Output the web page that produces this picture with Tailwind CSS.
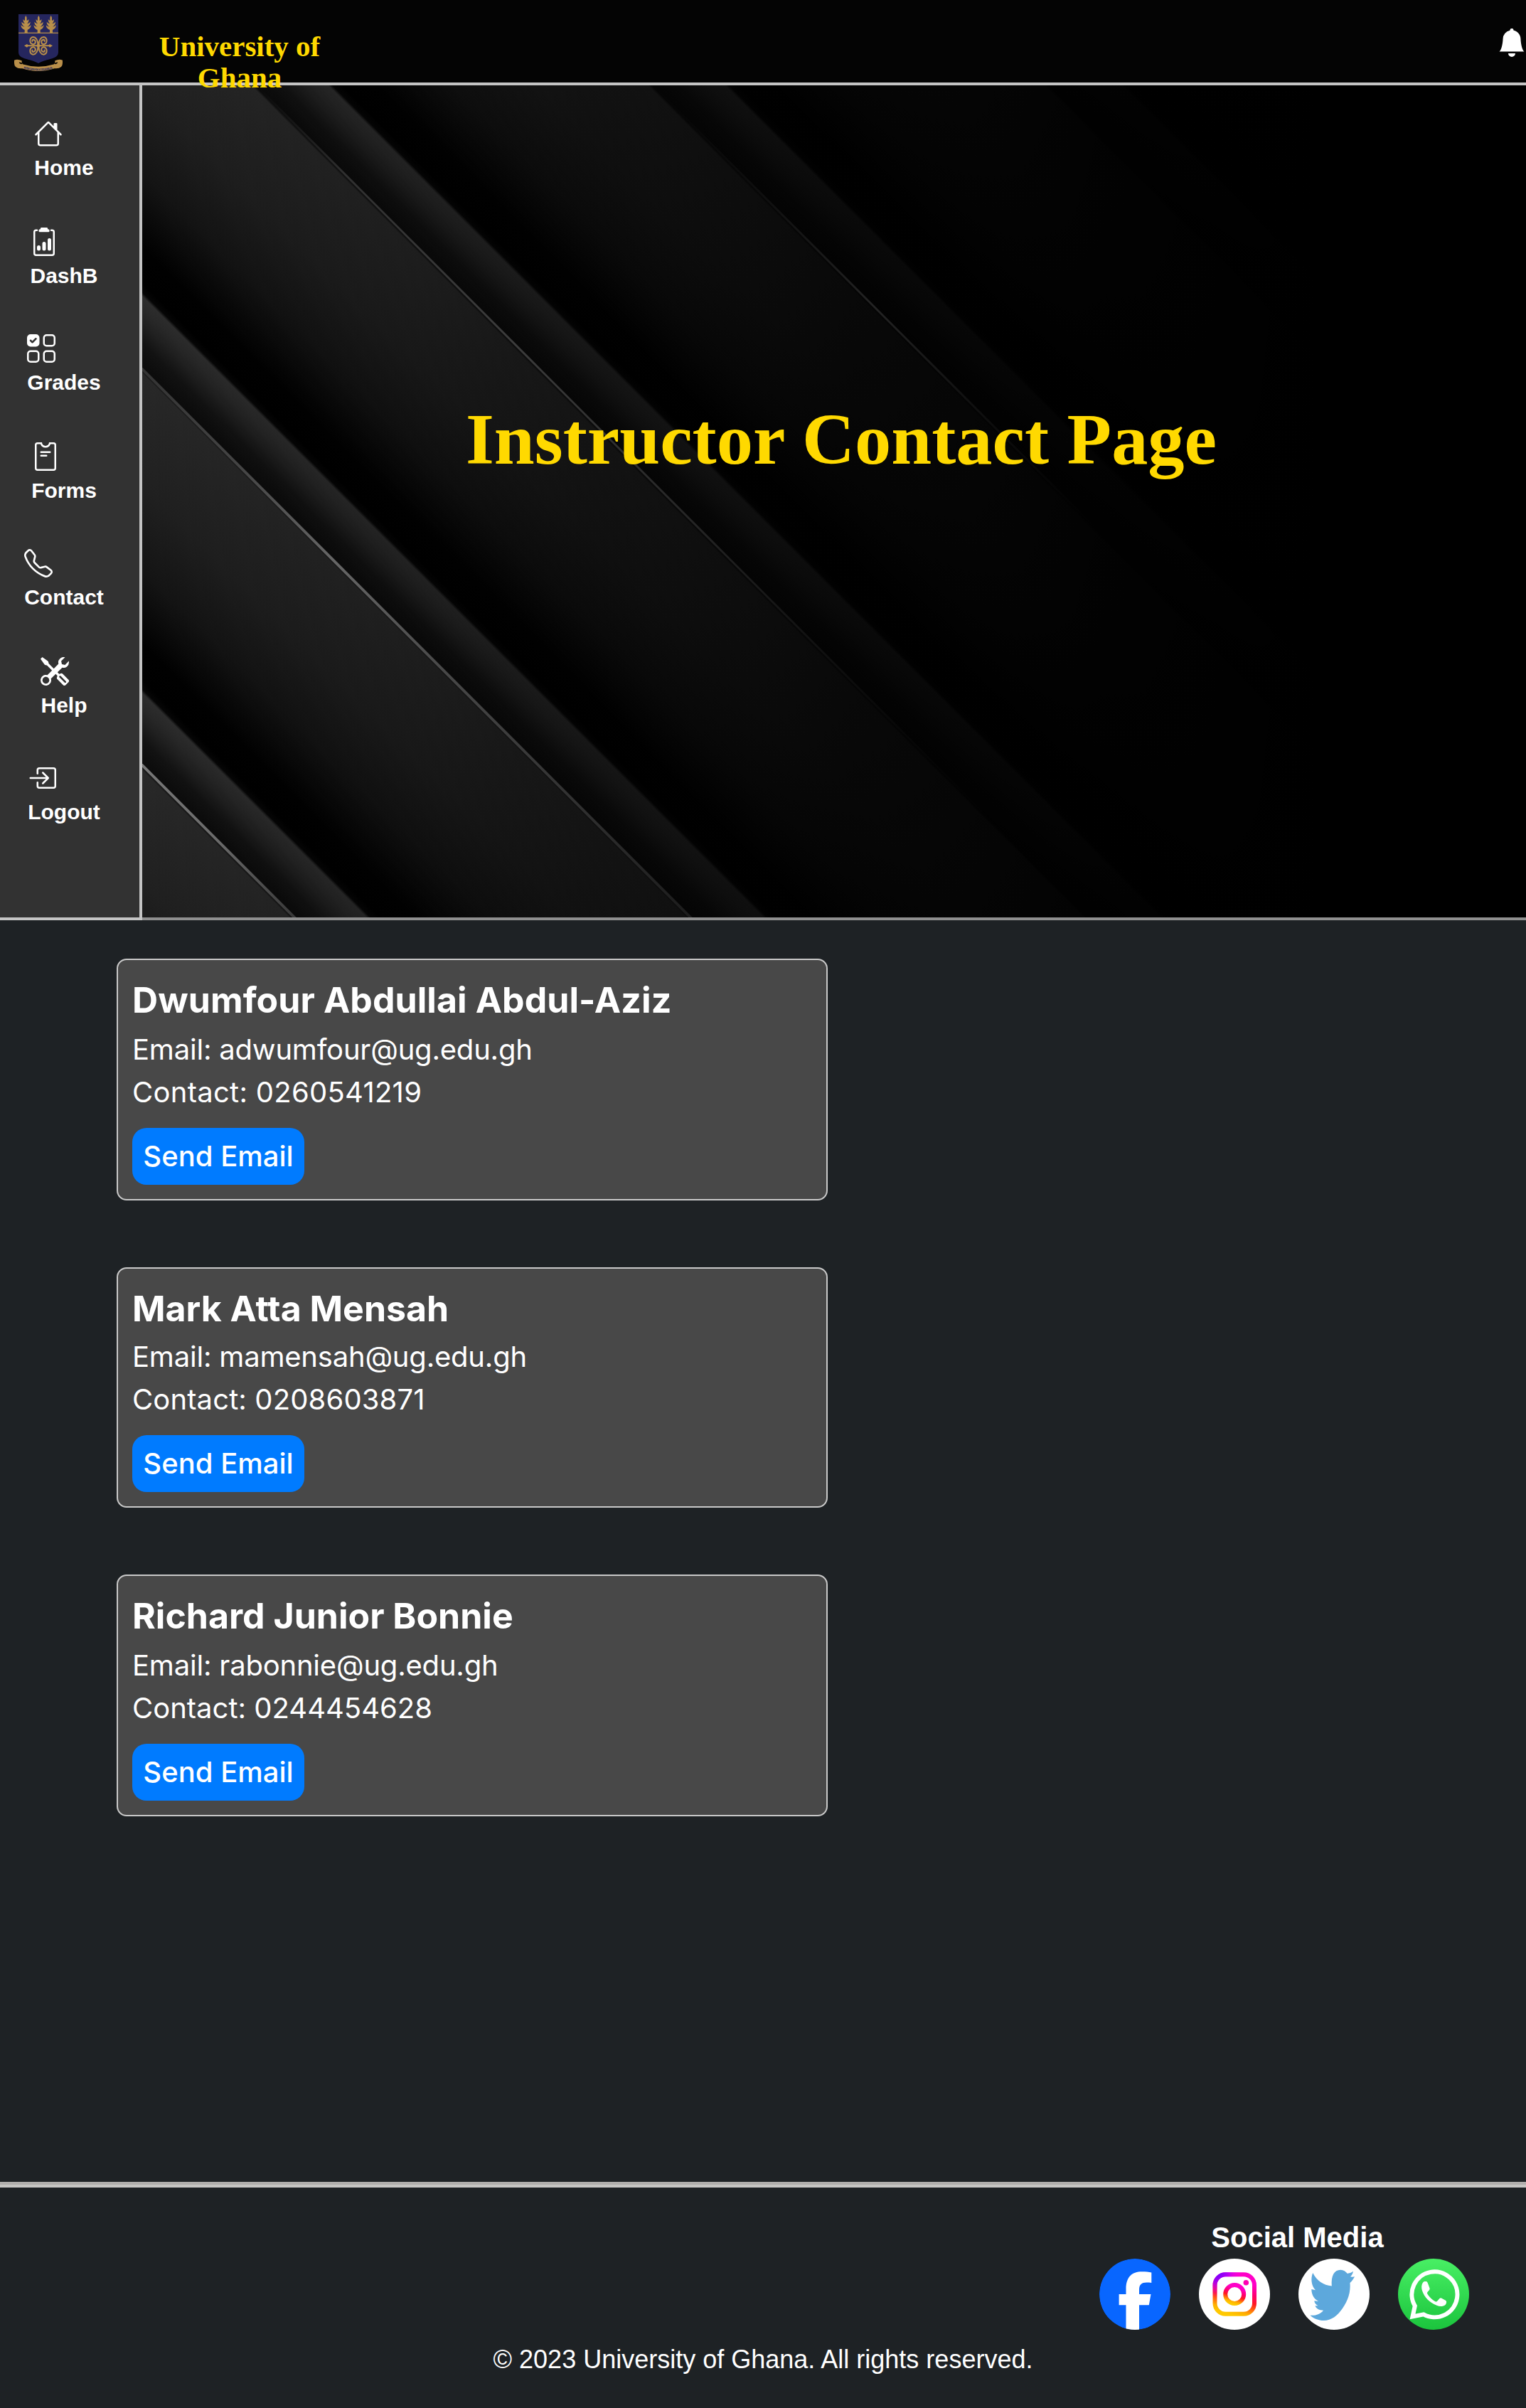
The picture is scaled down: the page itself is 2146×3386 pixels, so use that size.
<!DOCTYPE html>
<html lang="en">
<head>
<meta charset="utf-8">
<title>Instructor Contact Page</title>
<script src="https://cdn.jsdelivr.net/npm/@tailwindcss/browser@4"></script>
</head>
<body class="bg-[#1e2225] text-white font-['Liberation_Sans',sans-serif] w-[2146px] h-[3386px] overflow-hidden flex flex-col">
<header class="relative z-10 h-[120px] shrink-0 bg-[#040404] border-b-4 border-[#c4c4c4] flex justify-between">
  <div class="flex">
    <svg class="ml-5 mt-5 w-[68px] h-[80px]" viewBox="0 0 204 240">
      <path d="M18 0H186V160C186 192 140 186 102 207C64 186 18 192 18 160Z" fill="#25265e"/>
      <g fill="#b98f4a">
        <g id="tree"><path d="M49 5L53 14V27Q59 25 62 21Q62 33 54 40Q63 39 68 32Q68 45 56 53Q65 53 71 46Q70 60 56 66V78H44V66Q30 62 28 46Q34 53 44 53Q31 46 31 32Q36 39 45 40Q37 33 37 21Q40 25 45 27V14Z"/></g>
        <use href="#tree" x="54"/><use href="#tree" x="106"/>
        <path d="M18 77H186V81H18Z"/>
        <path d="M42 133L54 126L58 130H95L102 122L109 130H146L150 126L162 133L150 140L146 136H109L102 144L95 136H58L54 140Z"/>
        <path d="M0 194Q14 188 32 196V206Q22 200 20 204Q24 212 34 210L36 206V228Q0 232 0 206ZM204 194Q190 188 172 196V206Q182 200 184 204Q180 212 170 210L168 206V228Q204 232 204 206Z"/>
        <path d="M32 210Q102 232 172 210V228Q102 252 32 228Z"/>
      </g>
      <g fill="none" stroke="#b98f4a" stroke-width="6">
        <path id="curl" d="M101 131Q98 96 79 96A16 16 0 0 0 79 127A10 10 0 0 0 80 107A5 5 0 0 0 78 116"/>
        <use href="#curl" transform="translate(204 0) scale(-1 1)"/>
        <use href="#curl" transform="translate(0 266) scale(1 -1)"/>
        <use href="#curl" transform="translate(204 266) scale(-1 -1)"/>
      </g>
      <path id="motto" d="M40 229Q102 248 166 229" fill="none"/>
      <text font-size="13" font-weight="700" fill="#25265e" font-family="Liberation Sans"><textPath href="#motto" textLength="124">INTEGRI PROCEDAMUS</textPath></text>
    </svg>
    <h2 class="ml-[119px] mt-[43px] w-[260px] text-center text-[40.96px] leading-[44px] font-bold text-[#ffd900] font-['Liberation_Serif',serif]">University of Ghana</h2>
  </div>
  <svg class="mt-10 size-10" viewBox="0 0 16 16" fill="#fff"><path d="M8 16a2 2 0 0 0 2-2H6a2 2 0 0 0 2 2zm.995-14.901a1 1 0 1 0-1.99 0A5.002 5.002 0 0 0 3 6c0 1.098-.5 6-2 7h14c-1.5-1-2-5.902-2-7 0-2.42-1.72-4.44-4.005-4.901z"/></svg>
</header>

<div class="flex h-[1174px] shrink-0">
  <nav class="w-[200px] shrink-0 bg-[#323232] border-r-4 border-b-4 border-[#c4c4c4] pt-12 pr-4 flex flex-col items-center text-[30px] leading-[34px] font-bold">
    <a class="h-[152px] shrink-0"><svg class="size-10 mb-[11px]" viewBox="0 0 16 16" fill="#fff"><path d="M8.707 1.5a1 1 0 0 0-1.414 0L.646 8.146a.5.5 0 0 0 .708.708L2 8.207V13.5A1.5 1.5 0 0 0 3.5 15h9a1.5 1.5 0 0 0 1.5-1.5V8.207l.646.647a.5.5 0 0 0 .708-.708L13 5.793V2.5a.5.5 0 0 0-.5-.5h-1a.5.5 0 0 0-.5.5v1.293L8.707 1.5ZM13 7.207V13.5a.5.5 0 0 1-.5.5h-9a.5.5 0 0 1-.5-.5V7.207l5-5 5 5Z"/></svg><span class="block">Home</span></a>
    <a class="h-[150px] shrink-0"><svg class="size-10 mb-[11px]" viewBox="0 0 16 16" fill="#fff"><path d="M9.5 0a.5.5 0 0 1 .5.5.5.5 0 0 0 .5.5.5.5 0 0 1 .5.5V2a.5.5 0 0 1-.5.5h-5A.5.5 0 0 1 5 2v-.5a.5.5 0 0 1 .5-.5.5.5 0 0 0 .5-.5.5.5 0 0 1 .5-.5h3Z"/><path d="M3 2.5a.5.5 0 0 1 .5-.5H4a.5.5 0 0 0 0-1h-.5A1.5 1.5 0 0 0 2 2.5v12A1.5 1.5 0 0 0 3.5 16h9a1.5 1.5 0 0 0 1.5-1.5v-12A1.5 1.5 0 0 0 12.5 1H12a.5.5 0 0 0 0 1h.5a.5.5 0 0 1 .5.5v12a.5.5 0 0 1-.5.5h-9a.5.5 0 0 1-.5-.5v-12Z"/><path d="M10 7a1 1 0 1 1 2 0v5a1 1 0 1 1-2 0V7Zm-6 4a1 1 0 1 1 2 0v1a1 1 0 1 1-2 0v-1Zm4-3a1 1 0 0 0-1 1v3a1 1 0 1 0 2 0V9a1 1 0 0 0-1-1Z"/></svg><span class="block">DashB</span></a>
    <a class="h-[152px] shrink-0"><svg class="size-10 mb-[11px]" viewBox="0 0 16 16" fill="#fff"><path d="M2 10h3a1 1 0 0 1 1 1v3a1 1 0 0 1-1 1H2a1 1 0 0 1-1-1v-3a1 1 0 0 1 1-1zm9-9h3a1 1 0 0 1 1 1v3a1 1 0 0 1-1 1h-3a1 1 0 0 1-1-1V2a1 1 0 0 1 1-1zm0 9a1 1 0 0 0-1 1v3a1 1 0 0 0 1 1h3a1 1 0 0 0 1-1v-3a1 1 0 0 0-1-1h-3zm0-10a2 2 0 0 0-2 2v3a2 2 0 0 0 2 2h3a2 2 0 0 0 2-2V2a2 2 0 0 0-2-2h-3zM2 9a2 2 0 0 0-2 2v3a2 2 0 0 0 2 2h3a2 2 0 0 0 2-2v-3a2 2 0 0 0-2-2H2zm7 2a2 2 0 0 1 2-2h3a2 2 0 0 1 2 2v3a2 2 0 0 1-2 2h-3a2 2 0 0 1-2-2v-3zM0 2a2 2 0 0 1 2-2h3a2 2 0 0 1 2 2v3a2 2 0 0 1-2 2H2a2 2 0 0 1-2-2V2zm5.354.854a.5.5 0 1 0-.708-.708L3 3.793l-.646-.647a.5.5 0 1 0-.708.708l1 1a.5.5 0 0 0 .708 0l2-2z" fill-rule="evenodd"/></svg><span class="block">Grades</span></a>
    <a class="h-[150px] shrink-0"><svg class="size-10 mb-[11px]" viewBox="0 0 16 16" fill="#fff"><path d="M5.5 5a.5.5 0 0 0 0 1h5a.5.5 0 0 0 0-1h-5Zm0 2a.5.5 0 0 0 0 1h3a.5.5 0 0 0 0-1h-3Z"/><path d="M8 2a2 2 0 0 0 2-2h2.5A1.5 1.5 0 0 1 14 1.5v13a1.5 1.5 0 0 1-1.5 1.5h-9A1.5 1.5 0 0 1 2 14.5v-13A1.5 1.5 0 0 1 3.5 0H6a2 2 0 0 0 2 2Zm0 1a3.001 3.001 0 0 1-2.83-2H3.5a.5.5 0 0 0-.5.5v13a.5.5 0 0 0 .5.5h9a.5.5 0 0 0 .5-.5v-13a.5.5 0 0 0-.5-.5h-1.67A3.001 3.001 0 0 1 8 3Z"/></svg><span class="block">Forms</span></a>
    <a class="h-[152px] shrink-0"><svg class="size-10 mb-[11px]" viewBox="0 0 16 16" fill="#fff"><path d="M3.654 1.328a.678.678 0 0 0-1.015-.063L1.605 2.3c-.483.484-.661 1.169-.45 1.77a17.568 17.568 0 0 0 4.168 6.608 17.569 17.569 0 0 0 6.608 4.168c.601.211 1.286.033 1.77-.45l1.034-1.034a.678.678 0 0 0-.063-1.015l-2.307-1.794a.678.678 0 0 0-.58-.122l-2.19.547a1.745 1.745 0 0 1-1.657-.459L5.482 8.062a1.745 1.745 0 0 1-.46-1.657l.548-2.19a.678.678 0 0 0-.122-.58L3.654 1.328zM1.884.511a1.745 1.745 0 0 1 2.612.163L6.29 2.98c.329.423.445.974.315 1.494l-.547 2.19a.678.678 0 0 0 .178.643l2.457 2.457a.678.678 0 0 0 .644.178l2.189-.547a1.745 1.745 0 0 1 1.494.315l2.306 1.794c.829.645.905 1.87.163 2.611l-1.034 1.034c-.74.74-1.846 1.065-2.877.702a18.634 18.634 0 0 1-7.01-4.42 18.634 18.634 0 0 1-4.42-7.009c-.362-1.03-.037-2.137.703-2.877L1.885.511z"/></svg><span class="block">Contact</span></a>
    <a class="h-[150px] shrink-0"><svg class="size-10 mb-[11px]" viewBox="0 0 16 16" fill="#fff"><path d="M1 0 0 1l2.2 3.081a1 1 0 0 0 .815.419h.07a1 1 0 0 1 .708.293l2.675 2.675-2.617 2.654A3.003 3.003 0 0 0 0 13a3 3 0 1 0 5.878-.851l2.654-2.617.968.968-.305.914a1 1 0 0 0 .242 1.023l3.27 3.27a.997.997 0 0 0 1.414 0l1.586-1.586a.997.997 0 0 0 0-1.414l-3.27-3.27a1 1 0 0 0-1.023-.242L10.5 9.5l-.96-.96 2.68-2.643A3.005 3.005 0 0 0 16 3c0-.269-.035-.53-.102-.777l-2.14 2.141L12 4l-.364-1.757L13.777.102a3 3 0 0 0-3.675 3.68L7.462 6.46 4.793 3.793a1 1 0 0 1-.293-.707v-.071a1 1 0 0 0-.419-.814L1 0Zm9.646 10.646a.5.5 0 0 1 .708 0l2.914 2.915a.5.5 0 0 1-.707.707l-2.915-2.914a.5.5 0 0 1 0-.708ZM3 11l.471.242.529.026.287.445.445.287.026.529L5 13l-.242.471-.026.529-.445.287-.287.445-.529.026L3 15l-.471-.242L2 14.732l-.287-.445L1.268 14l-.026-.529L1 13l.242-.471.026-.529.445-.287.287-.445.529-.026L3 11Z"/></svg><span class="block">Help</span></a>
    <a class="h-[150px] shrink-0"><svg class="size-10 mb-[11px]" viewBox="0 0 16 16" fill="#fff"><path d="M6 3.5a.5.5 0 0 1 .5-.5h8a.5.5 0 0 1 .5.5v9a.5.5 0 0 1-.5.5h-8a.5.5 0 0 1-.5-.5v-2a.5.5 0 0 0-1 0v2A1.5 1.5 0 0 0 6.5 14h8a1.5 1.5 0 0 0 1.5-1.5v-9A1.5 1.5 0 0 0 14.5 2h-8A1.5 1.5 0 0 0 5 3.5v2a.5.5 0 0 0 1 0v-2z"/><path d="M11.854 8.354a.5.5 0 0 0 0-.708l-3-3a.5.5 0 1 0-.708.708L10.293 7.5H1.5a.5.5 0 0 0 0 1h8.793l-2.147 2.146a.5.5 0 0 0 .708.708l3-3z"/></svg><span class="block">Logout</span></a>
  </nav>
  <section class="relative grow border-b-4 border-[#8f8f8f] bg-[linear-gradient(90deg,transparent_0px,rgb(0_0_0/.25)_370px,rgb(0_0_0/.52)_650px,rgb(0_0_0/.78)_1000px,rgb(0_0_0/.94)_1350px,#000_1650px),repeating-linear-gradient(45deg,#0b0b0b_150px,#0d0d0d_160px,#121212_176px,#212121_198px,#282828_210px,#2d2d2d_223px,#060606_227px,#000_236px,#010101_272px,#141414_345px,#202020_430px,#282828_541px,#0b0b0b_544.6px)] flex justify-center pl-5">
    <svg class="absolute inset-0 w-[1946px] h-[1170px]" viewBox="0 0 1946 1170" fill="none" stroke-width="4">
      <defs>
        <linearGradient id="edgeA" gradientUnits="userSpaceOnUse" x1="0" y1="0" x2="214" y2="0"><stop stop-color="#777"/><stop offset=".5" stop-color="#6a6a6a"/><stop offset="1" stop-color="#383838"/></linearGradient>
        <linearGradient id="edgeB" gradientUnits="userSpaceOnUse" x1="0" y1="0" x2="770" y2="0"><stop stop-color="#333"/><stop offset=".18" stop-color="#444"/><stop offset=".35" stop-color="#666"/><stop offset=".55" stop-color="#484848"/><stop offset="1" stop-color="#1c1c1c"/></linearGradient>
        <linearGradient id="edgeC" gradientUnits="userSpaceOnUse" x1="160" y1="0" x2="1200" y2="0"><stop stop-color="#222" stop-opacity="0"/><stop offset=".12" stop-color="#303030"/><stop offset=".35" stop-color="#3c3c3c"/><stop offset=".6" stop-color="#242424"/><stop offset="1" stop-color="#0a0a0a" stop-opacity="0"/></linearGradient>
        <linearGradient id="edgeD" gradientUnits="userSpaceOnUse" x1="718" y1="0" x2="1340" y2="0"><stop stop-color="#111" stop-opacity="0"/><stop offset=".5" stop-color="#242424"/><stop offset="1" stop-color="#111" stop-opacity="0"/></linearGradient>
      </defs>
      <path d="M-5 951L216 1172" stroke="url(#edgeA)"/>
      <path d="M-5 394L773 1172" stroke="url(#edgeB)"/>
      <path d="M156 -4L1332 1172" stroke="url(#edgeC)" stroke-width="3"/>
      <path d="M714 -4L1890 1172" stroke="url(#edgeD)" stroke-width="3"/>
    </svg>
    <h1 class="relative mt-[438px] text-[102.4px] leading-[120px] font-bold text-[#ffd900] font-['Liberation_Serif',serif]">Instructor Contact Page</h1>
  </section>
</div>

<main class="h-[1774px] shrink-0 pt-[54px] pl-[164px] flex flex-col gap-[94px] font-['Inter',sans-serif] text-[40px] leading-[60px]">
  <article class="w-[1000px] h-[340px] border-2 border-[#c9c9c9] rounded-[14px] bg-[#484848] p-5">
    <h5 class="mb-1 text-[50px] leading-[72px] font-bold tracking-[0.08px]">Dwumfour Abdullai Abdul-Aziz</h5>
    <p class="tracking-[-0.2px]">Email: adwumfour@ug.edu.gh</p>
    <p class="tracking-[0.27px]">Contact: 0260541219</p>
    <button class="mt-5 w-[242px] h-20 rounded-[20px] bg-[#007bff] font-medium">Send Email</button>
  </article>
  <article class="w-[1000px] h-[338px] border-2 border-[#c9c9c9] rounded-[14px] bg-[#484848] p-5">
    <h5 class="mb-0.5 text-[50px] leading-[72px] font-bold">Mark Atta Mensah</h5>
    <p class="tracking-[-0.2px]">Email: mamensah@ug.edu.gh</p>
    <p class="tracking-[0.12px]">Contact: 0208603871</p>
    <button class="mt-5 w-[242px] h-20 rounded-[20px] bg-[#007bff] font-medium">Send Email</button>
  </article>
  <article class="w-[1000px] h-[340px] border-2 border-[#c9c9c9] rounded-[14px] bg-[#484848] p-5">
    <h5 class="mb-1 text-[50px] leading-[72px] font-bold">Richard Junior Bonnie</h5>
    <p class="tracking-[-0.2px]">Email: rabonnie@ug.edu.gh</p>
    <p>Contact: 0244454628</p>
    <button class="mt-5 w-[242px] h-20 rounded-[20px] bg-[#007bff] font-medium">Send Email</button>
  </article>
</main>
<div class="h-1 shrink-0 bg-[#b0aeac]"></div>
<footer class="grow border-t-4 border-[#c6c5c3] flex flex-col">
  <div class="self-end mr-20 w-[520px] mt-[47px]">
    <h4 class="ml-[37px] text-center text-[40px] leading-[46px] font-bold">Social Media</h4>
    <div class="flex gap-10 mt-[7px]">
      <svg class="size-[100px]" viewBox="0 0 100 100"><defs><clipPath id="disc"><circle cx="50" cy="50" r="50"/></clipPath></defs><g clip-path="url(#disc)"><circle cx="50" cy="50" r="50" fill="#0866ff"/><path d="M37.5 100V65.3H27.6V50H37.5V43C37.5 26 45.500 18.300 60 18.300C65 18.300 70 18.800 73.300 19.600V34C71 33.700 69 33.600 66.500 33.600C59.500 33.600 56 36.500 56 44V50H72.500L69.800 65.300H56V100Z" fill="#fff"/></g></svg>
      <svg class="size-[100px]" viewBox="0 0 100 100"><defs><linearGradient id="ig" x1=".35" y1="1" x2=".65" y2="0"><stop offset="0" stop-color="#ffc800"/><stop offset=".12" stop-color="#ffb000"/><stop offset=".4" stop-color="#ff1a20"/><stop offset=".6" stop-color="#ff0070"/><stop offset=".85" stop-color="#ff00c8"/></linearGradient><radialGradient id="ig2" gradientUnits="userSpaceOnUse" cx="26" cy="20" r="34"><stop offset="0" stop-color="#6a00ff"/><stop offset=".4" stop-color="#9a00ff" stop-opacity=".8"/><stop offset="1" stop-color="#f0f" stop-opacity="0"/></radialGradient></defs><circle cx="50" cy="50" r="50" fill="#fff"/><g fill="none" stroke-width="6"><rect x="22.500" y="22.200" width="55.500" height="55.500" rx="15" stroke="url(#ig)"/><rect x="22.500" y="22.200" width="55.500" height="55.500" rx="15" stroke="url(#ig2)"/><circle cx="50.200" cy="50" r="13" stroke="url(#ig)"/></g><circle cx="66.300" cy="33.700" r="3.800" fill="#ff00b4"/></svg>
      <svg class="size-[100px]" viewBox="0 0 100 100"><circle cx="50" cy="50" r="50" fill="#fff"/><path d="M20.200 20C26 31 35 37.500 46.800 38.500C45.800 24 50 15.700 59.300 15.700C63.500 15.700 66.500 18 68.800 21C71.500 20.500 74.500 19.500 77 17.700C76.500 20.500 75.500 23 73 25.300C75 26 77 25.800 79 25.300C77.500 28.500 75.500 31.500 72.500 34C73.500 47 70 59 61.400 70.700C55 80 46 87 35.800 87C28 87 21 84 16.500 79.700C24 80.500 31 78 35 72.700C29 72.500 25 70.500 23.500 66.300H27.500C24 64.500 22.500 62 22.300 59.300L28 60C22 56.500 18.500 51 18.300 43L24 44.300C18 38 17 28 20.200 20Z" fill="#5da8dc"/></svg>
      <svg class="size-[100px]" viewBox="0 0 100 100"><defs><linearGradient id="wa" x1="0" y1="0" x2="0" y2="1"><stop stop-color="#48ef64"/><stop offset="1" stop-color="#1bc43d"/></linearGradient></defs><circle cx="50" cy="50" r="50" fill="url(#wa)"/><path d="M20.500 81.500L23.800 66.500A32 32 0 1 1 36 78.400Z" fill="none" stroke="#fff" stroke-width="6" stroke-linejoin="miter"/><path d="M37 32C39 32 40.800 31.500 41.700 34L44.500 41.500C45.500 44.300 41 46.500 41 48.500C42 52 48.500 58.500 53 60.500C55.500 61 58 54.500 60.500 55.200L67 58.800C69 60 68 63.500 66.500 65C63 67.800 58.500 67.500 54.500 65.800C44 61.500 37 54 34 45C32 39.500 34 33 37 32Z" fill="#fff"/></svg>
    </div>
  </div>
  <p class="text-center text-[36px] leading-[42px] mt-[21px]">© 2023 University of Ghana. All rights reserved.</p>
</footer>
</body>
</html>
